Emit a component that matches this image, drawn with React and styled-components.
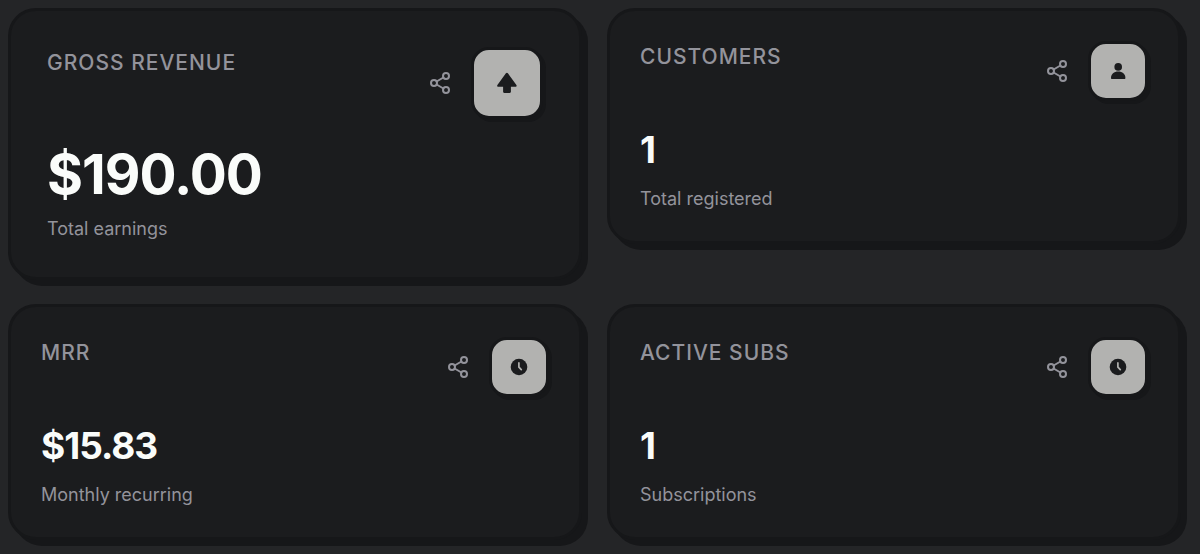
import React from "react"
import styled, { createGlobalStyle } from "styled-components"
import { Share2 } from "lucide-react"

const GlobalStyle = createGlobalStyle`
  * {
    box-sizing: border-box;
  }

  body {
    margin: 0;
    min-height: 100vh;
    background-color: #242527;
    font-family: Inter, "Liberation Sans", sans-serif;
  }
`

const StatsGrid = styled.main`
  display: grid;
  grid-template-columns: repeat(2, minmax(0, 1fr));
  align-items: start;
  gap: 24px 25px;
  padding: 8px 19px 8px 8px;
`

const Card = styled.section`
  padding: ${({ $large }) => ($large ? "36px" : "30px")};
  background-color: #1b1c1e;
  border: 3px solid #161719;
  border-radius: 28px;
  box-shadow: 6px 6px 0 #161719;
`

const CardHeader = styled.header`
  display: flex;
  align-items: flex-start;
  justify-content: space-between;
  margin-bottom: 24px;
`

const CardTitle = styled.h2`
  margin: 0;
  color: #93939b;
  font-size: 21px;
  font-weight: 500;
  line-height: 32px;
  letter-spacing: 1px;
  text-transform: uppercase;
`

const Actions = styled.div`
  display: flex;
  align-items: center;
  gap: 12px;
`

const ShareButton = styled.button`
  display: flex;
  align-items: center;
  justify-content: center;
  width: 38px;
  height: 38px;
  padding: 0;
  color: #93939b;
  background: none;
  border: none;
  cursor: pointer;
`

const IconBadge = styled.div`
  display: flex;
  align-items: center;
  justify-content: center;
  width: ${({ $large }) => ($large ? "72px" : "60px")};
  height: ${({ $large }) => ($large ? "72px" : "60px")};
  color: #1b1c1e;
  background-color: #b2b2b0;
  border: 3px solid #161719;
  border-radius: 18px;
  box-shadow: 3px 3px 0 #161719;
`

const Value = styled.p`
  margin: 0 0 12px;
  color: #fafcfa;
  font-size: ${({ $large }) => ($large ? "55px" : "37px")};
  font-weight: 700;
  line-height: ${({ $large }) => ($large ? "62px" : "50px")};
  letter-spacing: -1px;
`

const Caption = styled.p`
  margin: 0;
  color: #93939b;
  font-size: 18px;
  line-height: 24px;
`

const ArrowIcon = () => (
  <svg width="24" height="24" viewBox="0 0 24 24" fill="currentColor" aria-hidden="true">
    <path d="M10.9 2.3a1.3 1.3 0 0 1 2 0l8.5 11.6c.6.9.1 1.9-.9 1.9h-4.6v5c0 .7-.5 1.2-1.2 1.2H9.3c-.7 0-1.2-.5-1.2-1.2v-5H3.3c-1 0-1.5-1-.9-1.900z" />
  </svg>
)

const PersonIcon = () => (
  <svg width="24" height="24" viewBox="0 0 24 24" fill="currentColor" aria-hidden="true">
    <circle cx="12.2" cy="7.9" r="3.8" />
    <path d="M5 19c0-3.9 3-6.5 7.2-6.5s7.2 2.6 7.2 6.500c0 .8-.3 1.100-1 1.100H6c-.7 0-1-.3-1-1.100z" />
  </svg>
)

const ClockIcon = () => (
  <svg width="24" height="24" viewBox="0 0 24 24" aria-hidden="true">
    <circle cx="12" cy="12" r="8.3" fill="currentColor" />
    <path
      d="M11.9 7.9v4.3l2.4 2.5"
      fill="none"
      stroke="#b2b2b0"
      strokeWidth="1.7"
      strokeLinecap="round"
      strokeLinejoin="round"
    />
  </svg>
)

const stats = [
  {
    title: "Gross revenue",
    value: "$190.00",
    caption: "Total earnings",
    icon: <ArrowIcon />,
    large: true,
  },
  {
    title: "Customers",
    value: "1",
    caption: "Total registered",
    icon: <PersonIcon />,
  },
  {
    title: "MRR",
    value: "$15.83",
    caption: "Monthly recurring",
    icon: <ClockIcon />,
  },
  {
    title: "Active subs",
    value: "1",
    caption: "Subscriptions",
    icon: <ClockIcon />,
  },
]

const StatCard = ({ title, value, caption, icon, large }) => {
  return (
    <Card $large={large}>
      <CardHeader>
        <CardTitle>{title}</CardTitle>
        <Actions>
          <ShareButton type="button" aria-label={`Share ${title}`}>
            <Share2 size={24} />
          </ShareButton>
          <IconBadge $large={large}>{icon}</IconBadge>
        </Actions>
      </CardHeader>
      <Value $large={large}>{value}</Value>
      <Caption>{caption}</Caption>
    </Card>
  )
}

const App = () => {
  return (
    <>
      <GlobalStyle />
      <StatsGrid>
        {stats.map((stat) => (
          <StatCard key={stat.title} {...stat} />
        ))}
      </StatsGrid>
    </>
  )
}

export default App
